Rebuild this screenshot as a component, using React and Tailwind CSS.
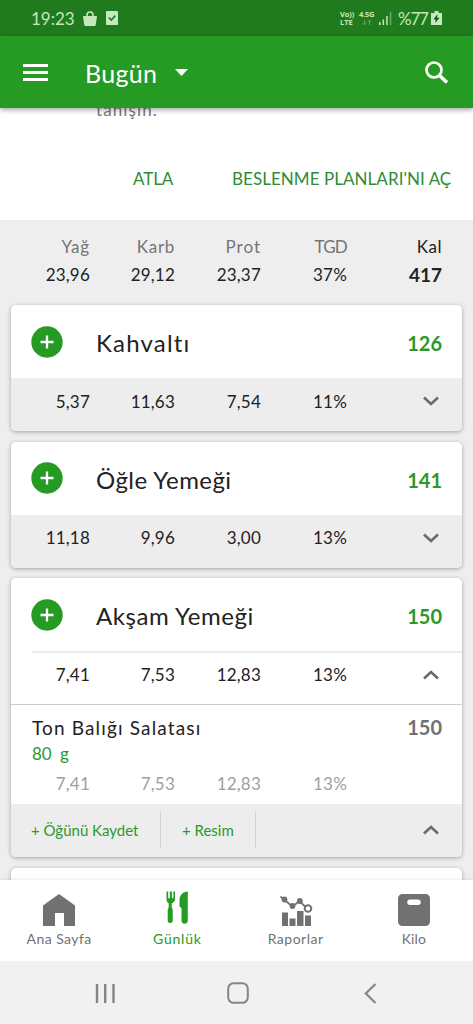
import { clsx } from 'clsx';

const MEALS = [
  {
    name: 'Kahvaltı',
    nameClass: 'tracking-[1.2px]',
    kcal: '126',
    macros: ['5,37', '11,63', '7,54', '11%'],
  },
  {
    name: 'Öğle Yemeği',
    nameClass: 'tracking-[0.45px]',
    kcal: '141',
    macros: ['11,18', '9,96', '3,00', '13%'],
  },
];

const DINNER_MACROS = ['7,41', '7,53', '12,83', '13%'];

function StatusBar() {
  return (
    <div className="flex h-9 shrink-0 items-center bg-[#1f7b1e] pl-[31px] pr-[31px] text-[#c5e8bd]">
      <span className="w-[52px] text-[17px] leading-none">19:23</span>
      <svg className="h-[15px] w-[14px]" viewBox="0 0 14 15" fill="currentColor">
        <path d="M0 5h14l-1.200 8.500a1.500 1.500 0 0 1-1.500 1.500h-8.600a1.500 1.500 0 0 1-1.500-1.500z" />
        <path d="M4 6V4a3 3 0 0 1 6 0v2" fill="none" stroke="currentColor" strokeWidth="1.600" />
      </svg>
      <svg className="ml-[9px] h-[14px] w-3" viewBox="0 0 12 14">
        <rect width="12" height="14" rx="1" fill="currentColor" />
        <path d="m2.800 6.500 2.500 2.500 4-4.300" fill="none" stroke="#1f7b1e" strokeWidth="1.700" />
      </svg>
      <div className="ml-auto flex items-center">
        <div className="w-[19px] whitespace-nowrap font-['Open_Sans'] text-[7.5px] font-bold leading-none">
          <div className="h-[8px] leading-[8px] tracking-[-0.1px]">Vo))</div>
          <div className="mt-px h-[7px] leading-[7px]">LTE</div>
        </div>
        <div className="w-5 whitespace-nowrap font-['Open_Sans'] text-[7.5px] font-bold">
          <div className="h-[8px] leading-[8px] tracking-[-0.2px]">4.5G</div>
          <svg className="ml-[3px] mt-px h-[7px] w-[10px]" viewBox="0 0 10 7" fill="none" stroke="#5fa55b">
            <path d="M2.500 1v5M.5 4l2 2 2-2M7.500 6V1M5.500 3l2-2 2 2" />
          </svg>
        </div>
        <svg className="h-[13px] w-[13px]" viewBox="0 0 13 13" fill="currentColor">
          <path d="M0 10h1.500v3H0zM3.600 7.500h1.500V13H3.600zM7.200 4h1.500v9H7.200z" />
          <path d="M10.800 0h1.500v13h-1.500z" opacity=".45" />
        </svg>
        <span className="ml-[6px] w-[33px] whitespace-nowrap text-[17px] leading-none tracking-[-1.2px]">%77</span>
        <svg className="h-[14px] w-[11px]" viewBox="0 0 11 14">
          <path d="M3.500 0h4v2H11v12H0V2h3.500z" fill="currentColor" />
          <path d="M6.500 3 2.500 8.500h2.200L4.200 12l4.300-5.300H6z" fill="#14550f" />
        </svg>
      </div>
    </div>
  );
}

function AppBar() {
  return (
    <div className="z-10 flex h-[72px] shrink-0 items-center bg-[#259b24] pl-[23px] pr-6 text-white shadow-[0_2px_5px_rgba(0,0,0,0.35)]">
      <div className="flex w-[25px] flex-col gap-[4px]">
        <div className="h-[3px] bg-white" />
        <div className="h-[3px] bg-white" />
        <div className="h-[3px] bg-white" />
      </div>
      <h1 className="ml-[37px] mt-[3px] w-[74px] whitespace-nowrap text-[25px] leading-none tracking-[0.3px]">Bugün</h1>
      <svg className="ml-4 mt-px h-[7px] w-[13px]" viewBox="0 0 13 7" fill="currentColor">
        <path d="M0 0h13L6.500 7z" />
      </svg>
      <svg className="ml-auto h-[23px] w-6" viewBox="0 0 24 23" fill="none" stroke="currentColor">
        <circle cx="9" cy="9" r="7.500" strokeWidth="2.700" />
        <path d="m14.500 14.500 7.500 7" strokeWidth="3.600" />
      </svg>
    </div>
  );
}

function Macros({ values, className }) {
  return (
    <>
      {values.map((v, i) => (
        <span key={i} className={clsx('text-right text-[17px] leading-none tracking-[0.2px]', className)}>
          {v}
        </span>
      ))}
    </>
  );
}

function Chevron({ up }) {
  return (
    <svg
      className={clsx('mr-[23px] h-[10px] w-4 justify-self-end', up && 'rotate-180')}
      viewBox="0 0 16 10"
      fill="none"
      stroke="#6b6b6b"
      strokeWidth="2.600"
    >
      <path d="m1 1.500 7 6.500 7-6.500" />
    </svg>
  );
}

function MacroRow({ values, up, className }) {
  return (
    <div className={clsx('grid grid-cols-[79px_85px_86px_86px_1fr] items-center text-[#222]', className)}>
      <Macros values={values} />
      <Chevron up={up} />
    </div>
  );
}

function MealHeader({ name, nameClass, kcal }) {
  return (
    <div className="flex h-[73px] items-center pl-5 pr-5">
      <svg className="h-8 w-8" viewBox="0 0 32 32">
        <circle cx="16" cy="16" r="15.700" fill="#259b24" />
        <path d="M16 9.500v13M9.500 16h13" stroke="#fff" strokeWidth="2.300" />
      </svg>
      <h2 className={clsx('ml-[33px] mt-[3px] whitespace-nowrap text-[24px] leading-none text-[#222]', nameClass)}>{name}</h2>
      <span className="ml-auto mt-[3px] text-[20px] font-bold leading-none text-[#2c982c]">{kcal}</span>
    </div>
  );
}

const CARD = 'mx-[11px] mb-[10.5px] shrink-0 overflow-hidden rounded-[5px] bg-white shadow-[0_1px_4px_rgba(0,0,0,0.32)]';

function Tab({ label, active, labelClass, children }) {
  return (
    <div className={clsx('flex flex-1 flex-col items-center pt-[13px]', active ? 'text-[#259b24]' : 'text-[#717171]')}>
      <svg className="h-[34px] w-9 overflow-visible" viewBox="0 0 36 34" fill="currentColor">
        {children}
      </svg>
      <span className={clsx('mt-[5px] whitespace-nowrap text-[14px] leading-none', labelClass)}>{label}</span>
    </div>
  );
}

export default function App() {
  return (
    <div className="flex h-[1024px] w-[473px] flex-col overflow-hidden bg-[#eee] font-['Lato','Noto_Sans',sans-serif]">
      <StatusBar />
      <AppBar />

      <div className="flex h-[772px] shrink-0 flex-col overflow-hidden">
        <div className="h-28 shrink-0 bg-white">
          <p className="-mt-[7px] ml-[96px] text-[17px] leading-[18px] tracking-[1.1px] text-[#777]">tanışın.</p>
          <div className="mt-[51px] flex justify-end pr-[22px] text-[17px] leading-[18px] text-[#2f8b35]">
            <span className="w-[99px] tracking-[-0.1px]">ATLA</span>
            <span className="w-[219px] whitespace-nowrap tracking-[0.05px]">BESLENME PLANLARI'NI AÇ</span>
          </div>
        </div>

        <div className="grid h-[85px] shrink-0 grid-cols-[90px_85px_86px_86px_95px] content-start gap-y-[11px] pt-[18px] text-right text-[17px] leading-none text-[#757575]">
          <span className="tracking-[0.8px]">Yağ</span>
          <span className="tracking-[0.7px]">Karb</span>
          <span className="tracking-[1px]">Prot</span>
          <span className="tracking-[-0.8px]">TGD</span>
          <span className="text-[#222] tracking-[0.5px]">Kal</span>
          <Macros values={['23,96', '29,12', '23,37', '37%']} className="text-[#222]" />
          <span className="-mt-px text-[19px] font-bold leading-none text-[#222]">417</span>
        </div>

        {MEALS.map((m) => (
          <div key={m.name} className={CARD}>
            <MealHeader {...m} />
            <MacroRow values={m.macros} className="h-[53px] bg-[#ededed] pb-[7px]" />
          </div>
        ))}

        <div className={CARD}>
          <MealHeader name="Akşam Yemeği" nameClass="tracking-[0.55px]" kcal="150" />
          <div className="ml-[21px] h-[2px] bg-[#ebebeb]" />
          <MacroRow values={DINNER_MACROS} up className="h-[51px] pb-[8px]" />
          <div className="h-[100px] border-t border-[#ccc]">
            <div className="flex justify-between pl-[21px] pr-5 pt-[13px] leading-none">
              <span className="whitespace-nowrap text-[19px] leading-none tracking-[1.15px] text-[#222]">Ton Balığı Salatası</span>
              <span className="-mt-px text-[20px] font-bold leading-none text-[#717171]">150</span>
            </div>
            <div className="mt-[8px] pl-[21px] text-[17px] leading-none text-[#2c982c] [word-spacing:4px]">80 g</div>
            <div className="mt-[13px] grid grid-cols-[79px_85px_86px_86px]">
              <Macros values={DINNER_MACROS} className="text-[#a0a0a0]" />
            </div>
          </div>
          <div className="flex h-[53px] items-center bg-[#ededed] pb-px text-[15px] leading-none text-[#2c982c]">
            <span className="ml-[20px] w-[129px] whitespace-nowrap">+ Öğünü Kaydet</span>
            <div className="h-9 w-px bg-[#d2d2d2]" />
            <span className="ml-[21px] w-[73px] whitespace-nowrap">+ Resim</span>
            <div className="h-9 w-px bg-[#d2d2d2]" />
            <div className="ml-auto flex">
              <Chevron up />
            </div>
          </div>
        </div>

        <div className={clsx(CARD, 'h-10')} />
      </div>

      <div className="z-10 flex h-[81px] shrink-0 bg-white shadow-[0_-1px_3px_rgba(0,0,0,0.08)]">
        <Tab label="Ana Sayfa" labelClass="tracking-[0.45px]">
          <path d="M18 1 34 12.500V33H23V20h-9v13H2V12.500z" />
        </Tab>
        <Tab label="Günlük" active labelClass="tracking-[0.8px]">
          <path d="M7.500-1.500v8c0 2 1 3 2.200 3.800V14l-1 3v10.500a2.500 2.500 0 0 0 5 0V17l-1-3v-3.700c1.800-.8 3.300-1.800 3.300-3.800v-8h-1.600v6.700h-1.500v-6.700H10.800v6.700H9.200v-6.700z" />
          <path d="M28.800-1.500C24-1.500 20.800 2 20.500 7v6.500l2 1.700v12.300a3.100 3.100 0 0 0 6.300 0z" />
        </Tab>
        <Tab label="Raporlar" labelClass="tracking-[0.5px]">
          <path d="M4 19.500h6v13.500H4zM11.500 25.500h6v7.500h-6zM19 18h6.500v15H19zM27 22.500h6V33h-6z" />
          <path d="M2.500 3.500 6.500 7l8 6.500 7-5.500L29 15.500" fill="none" stroke="currentColor" strokeWidth="1.800" />
          <circle cx="6.500" cy="6.500" r="2.900" />
          <circle cx="14.500" cy="13" r="2.900" />
          <circle cx="21.800" cy="8" r="2.900" />
          <circle cx="30" cy="15.500" r="3.300" fill="#fff" stroke="currentColor" strokeWidth="2" />
        </Tab>
        <Tab label="Kilo" labelClass="tracking-[0.1px]">
          <path
            fillRule="evenodd"
            d="M6.500 1h23a4.500 4.500 0 0 1 4.500 4.500v23a4.500 4.500 0 0 1-4.500 4.500h-23A4.500 4.500 0 0 1 2 28.500v-23A4.500 4.500 0 0 1 6.500 1zM14 6.500a2.700 2.700 0 0 0 0 5.500h8a2.700 2.700 0 0 0 0-5.500z"
          />
        </Tab>
      </div>

      <div className="z-10 flex h-[63px] shrink-0 items-center bg-[#f1f1f1] pl-[95px] pt-px text-[#858585]">
        <svg className="h-[21px] w-5" viewBox="0 0 20 21" fill="none" stroke="currentColor" strokeWidth="2.400">
          <path d="M2 1v19M10.200 1v19M18.500 1v19" />
        </svg>
        <svg className="ml-[112px] h-[22px] w-[22px]" viewBox="0 0 22 22" fill="none" stroke="currentColor" strokeWidth="2">
          <rect x="1.200" y="1.200" width="19.600" height="19.600" rx="5.500" />
        </svg>
        <svg className="ml-[115px] h-[21px] w-3" viewBox="0 0 12 21" fill="none" stroke="currentColor" strokeWidth="2.200">
          <path d="M11.500 1 1.800 10.500 11.500 20" />
        </svg>
      </div>
    </div>
  );
}
